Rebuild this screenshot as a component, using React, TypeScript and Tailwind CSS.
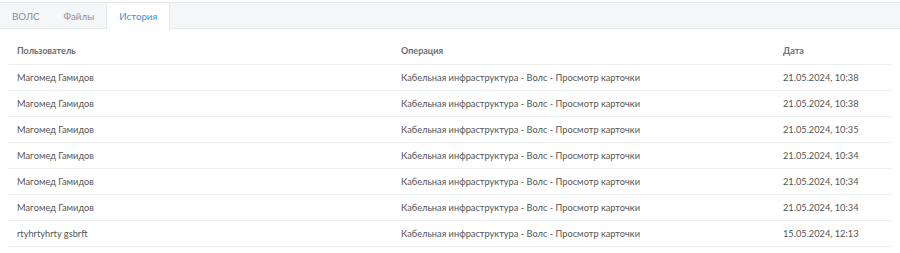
import React, { useState } from "react";

type Row = { user: string; op: string; date: string };

const rows: Row[] = [
  { user: "Магомед Гамидов", op: "Кабельная инфраструктура - Волс - Просмотр карточки", date: "21.05.2024, 10:38" },
  { user: "Магомед Гамидов", op: "Кабельная инфраструктура - Волс - Просмотр карточки", date: "21.05.2024, 10:38" },
  { user: "Магомед Гамидов", op: "Кабельная инфраструктура - Волс - Просмотр карточки", date: "21.05.2024, 10:35" },
  { user: "Магомед Гамидов", op: "Кабельная инфраструктура - Волс - Просмотр карточки", date: "21.05.2024, 10:34" },
  { user: "Магомед Гамидов", op: "Кабельная инфраструктура - Волс - Просмотр карточки", date: "21.05.2024, 10:34" },
  { user: "Магомед Гамидов", op: "Кабельная инфраструктура - Волс - Просмотр карточки", date: "21.05.2024, 10:34" },
  { user: "rtyhrtyhrty gsbrft", op: "Кабельная инфраструктура - Волс - Просмотр карточки", date: "15.05.2024, 12:13" },
];

const tabs = ["ВОЛС", "Файлы", "История"];

const App: React.FC = () => {
  const [active, setActive] = useState(2);

  return (
    <div className="w-[900px] h-[253px] bg-white font-['Lato',sans-serif] text-[9.25px] text-[#555]">
      {/* -- tabs */}
      <div className="mt-[2px] h-[27px] flex bg-[#f5f6f8] border-t border-b border-[#e6e8eb]">
        {tabs.map((t, i) => (
          <button
            key={t}
            onClick={() => setActive(i)}
            className={
              i === active
                ? "h-[27px] px-3 -mb-px bg-white border-l border-r border-[#e6e8eb] text-[#4a8fd0] text-[9.75px]"
                : "h-[26px] px-3 text-[#8a8f96] text-[9.75px]"
            }
          >
            {t}
          </button>
        ))}
      </div>

      {/* -- table */}
      <div className="mx-2 mt-[9px]">
        <div className="grid grid-cols-[384px_382px_1fr] h-[27px] items-center border-b border-[#eceef0] font-bold text-[9px] text-[#6b6e72]">
          <div className="px-[9px]">Пользователь</div>
          <div className="px-[9px]">Операция</div>
          <div className="px-[9px]">Дата</div>
        </div>
        {rows.map((r, i) => (
          <div
            key={i}
            className="grid grid-cols-[384px_382px_1fr] h-[26px] items-center border-b border-[#eceef0]"
          >
            <div className="px-[9px]">{r.user}</div>
            <div className="px-[9px]">{r.op}</div>
            <div className="px-[9px]">{r.date}</div>
          </div>
        ))}
      </div>
    </div>
  );
};

export default App;
